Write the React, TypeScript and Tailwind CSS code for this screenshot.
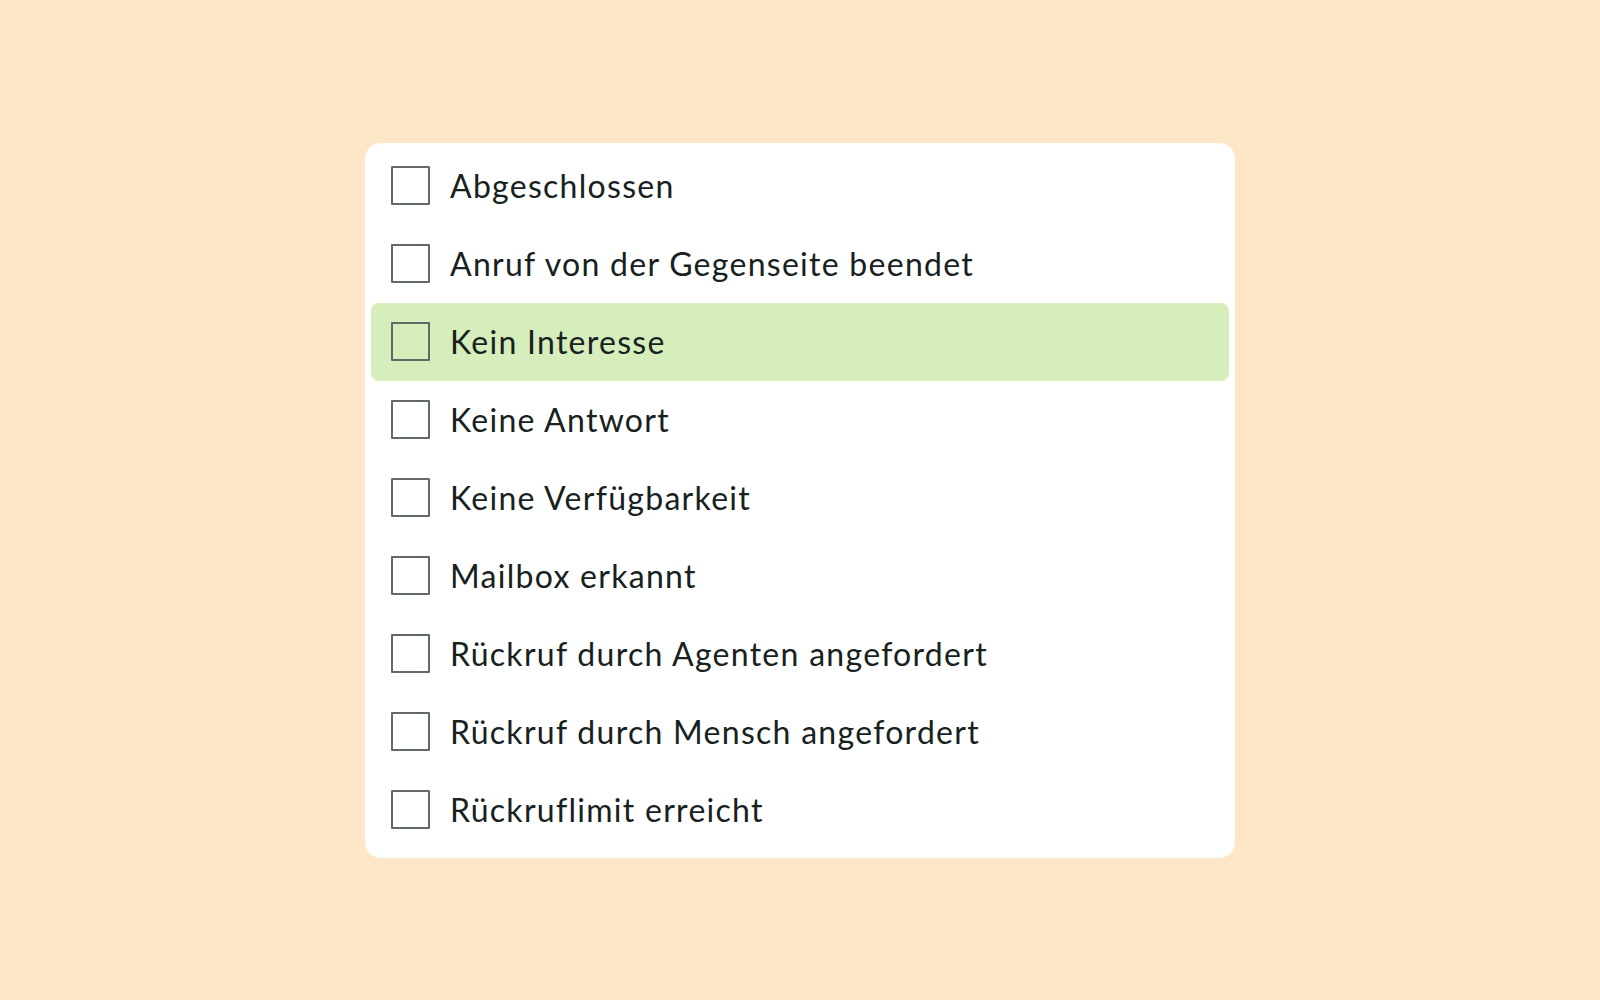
const options = [
  "Abgeschlossen",
  "Anruf von der Gegenseite beendet",
  "Kein Interesse",
  "Keine Antwort",
  "Keine Verfügbarkeit",
  "Mailbox erkannt",
  "Rückruf durch Agenten angefordert",
  "Rückruf durch Mensch angefordert",
  "Rückruflimit erreicht",
];

export default function App() {
  const active = "Kein Interesse";

  return (
    <div className="min-h-screen w-full bg-[#fde7c8] flex items-center justify-center font-['Lato',_'Liberation_Sans',_sans-serif]">
      <ul className="w-[870px] bg-white rounded-[16px] px-[6px] pt-[4px] pb-[9px]">
        {options.map((label) => {
          const selected = label === active;
          return (
            <li
              key={label}
              className={`h-[78px] flex items-center gap-[20px] pl-[20px] rounded-[8px] ${
                selected ? "bg-[#d5eebb]" : ""
              }`}
            >
              <span className="w-[39px] h-[39px] shrink-0 border-2 border-[#626a67] rounded-[1px]" />
              <span className="text-[32px] leading-none tracking-[0.04em] text-[#17211d]">{label}</span>
            </li>
          );
        })}
      </ul>
    </div>
  );
}
